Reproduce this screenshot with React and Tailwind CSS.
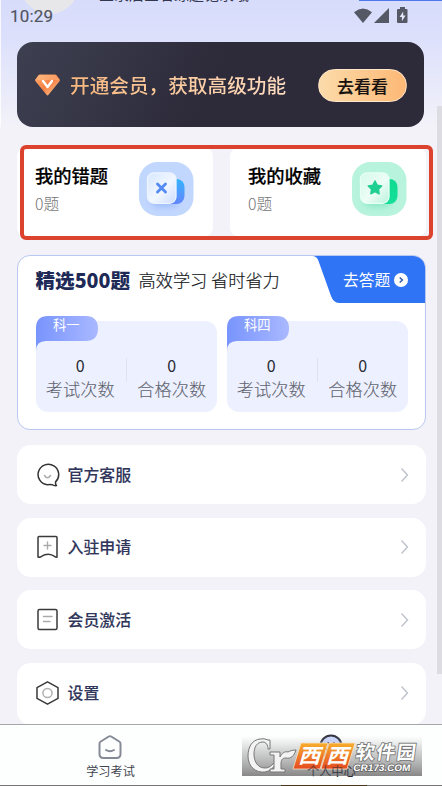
import React from 'react';

const cjk = 'font-["Noto_Sans_CJK_SC",sans-serif]';

function StatusBar() {
  return (
    <header className="relative h-[42px] shrink-0 overflow-hidden">
      <div className="absolute left-[20px] top-[-45px] size-[59px] rounded-full bg-[#e7e7ea]" />
      <div className="absolute left-[99px] top-[-15px] text-[15px] leading-[17px] whitespace-nowrap text-[#34384f]">登录后查看练题记录哦</div>
      <div className="absolute left-[359px] top-0 h-px w-[83px] bg-[#4f78e8]" />
      <div className="relative flex h-[31px] items-center justify-between pl-[10px] pr-[33px]">
        <span className='font-["Roboto",sans-serif] text-[17px] leading-[20px] tracking-[0.2px] text-[#50545f] [-webkit-text-stroke:0.150px_#50545f]'>10:29</span>
        <svg width="56" height="18" viewBox="0 0 56 18" fill="#555966">
          <path d="M1 5.2Q10 -2 19 5.2L10 16Z" />
          <path d="M36 1V16H21Z" />
          <path d="M45 2.100h2V0h5v2.100h1.500q1 0 1 1V15q0 1-1 1h-8.500q-1 0-1-1V3.100q0-1 1-1Z" />
          <path d="M50.200 4.500 46.600 10h2.300v4.300l3.700-5.800h-2.400Z" fill="#e3e6fa" />
        </svg>
      </div>
    </header>
  );
}

function VipCard() {
  return (
    <section className="ml-[17px] flex h-[85px] w-[407px] shrink-0 items-center rounded-[16px] bg-[linear-gradient(115deg,#3d4051_0%,#2d2a39_48%,#2d2a39_100%)] pl-[17px] pr-[17px]">
      <svg width="27" height="24" viewBox="0 0 27 24">
        <defs>
          <linearGradient id="gem" x1="0" y1="0" x2="1" y2="1">
            <stop stopColor="#ffb070" /><stop offset=".5" stopColor="#f77f43" /><stop offset="1" stopColor="#ffd09a" />
          </linearGradient>
        </defs>
        <path d="M6 1.500h15q1 0 1.600.8l3 4q.7 1-.1 2L14.500 21.800q-1 1.200-2 0L1.500 8.300q-.8-1-.1-2l3-4q.6-.8 1.600-.8Z" fill="url(#gem)" />
        <path d="M5 2h17l3 5H2Z" fill="#ffca98" opacity=".4" />
        <path d="m9 8 4.500 6L18 8" fill="none" stroke="#fff" strokeWidth="2.400" strokeLinecap="round" strokeLinejoin="round" />
      </svg>
      <h2 className="ml-[9px] mt-[1px] whitespace-nowrap bg-gradient-to-r from-[#f9b97e] to-[#fddcc0] bg-clip-text text-[19.650px] font-medium leading-[28px] text-transparent">开通会员，获取高级功能</h2>
      <button className="ml-auto mt-[1px] h-[33px] w-[89px] rounded-full border border-[#ffe7ca] bg-gradient-to-r from-[#fbdbaa] to-[#fdb875] text-[17px] font-medium leading-[31px] text-[#17120f] [-webkit-text-stroke:0.200px_#17120f]">去看看</button>
    </section>
  );
}

function StackIcon({ green }) {
  const id = green ? 'green' : 'blue';
  return (
    <svg width="55" height="55" viewBox="0 0 55 55">
      <defs>
        <linearGradient id={id + 'Back'} x1="0" y1="0" x2="0" y2="1">
          <stop stopColor={green ? '#0edb90' : '#35b3ff'} /><stop offset="1" stopColor={green ? '#15df9a' : '#6385fb'} />
        </linearGradient>
        <linearGradient id={id + 'Front'} x1="0" y1="0" x2="1" y2="1">
          <stop stopColor={green ? '#d5faeb' : '#d5e7ff'} /><stop offset=".55" stopColor={green ? '#edfdf7' : '#f2f7ff'} /><stop offset="1" stopColor={green ? '#b9f2db' : '#ccdcff'} />
        </linearGradient>
        <filter id={id + 'Shade'} x="-30%" y="-30%" width="160%" height="170%"><feGaussianBlur stdDeviation="3" /></filter>
      </defs>
      <rect width="54.500" height="54" rx="18.500" fill={green ? '#b7f3dd' : '#c2d7fe'} />
      <rect x="12" y="21" width="27" height="24" rx="7" fill={green ? '#57dcae' : '#769dfa'} opacity=".45" filter={`url(#${id}Shade)`} />
      <rect x="21" y="17" width="24.500" height="25" rx="8" fill={`url(#${id}Back)`} />
      <rect x="8.500" y="10.800" width="28.500" height="30.500" rx="6.500" fill={`url(#${id}Front)`} stroke={green ? '#e7fff6' : '#edf4ff'} strokeWidth="1.300" />
      {green ? (
        <path d="m23 19 2.100 4.200 4.600.7-3.300 3.300.7 4.600-4.100-2.100-4.100 2.100.7-4.600-3.300-3.300 4.600-.7Z" fill="#20cf92" stroke="#20cf92" strokeWidth="1.500" strokeLinejoin="round" />
      ) : (
        <path d="m18.500 22 8 8m0-8-8 8" stroke="#558bf2" strokeWidth="2.900" strokeLinecap="round" />
      )}
    </svg>
  );
}

function CountCard({ title, green }) {
  return (
    <article className="flex h-[88px] w-[196px] rounded-[8px] bg-white pl-[18px] pr-[19px] pt-[14px]">
      <div className="flex-1 whitespace-nowrap">
        <h3 className="text-[18.300px] font-medium leading-[26px] text-black [-webkit-text-stroke:0.200px_black]">{title}</h3>
        <p className="mt-[5px] text-[15.800px] font-light leading-[22px] text-[#777]">0题</p>
      </div>
      <StackIcon green={green} />
    </article>
  );
}

function ExamPanel({ label }) {
  return (
    <div className="relative h-[91px] w-[181px] rounded-[12px] bg-[#edf0ff] pt-[34px]">
      <svg className="absolute left-0 top-[-5px]" width="63" height="35" viewBox="0 0 63 35">
        <defs>
          <linearGradient id={label}><stop stopColor="#7894fd" /><stop offset="1" stopColor="#a9b8ff" /></linearGradient>
        </defs>
        <path d="M0 12Q0 0 12 0H49.500Q62 0 62 12.500Q62 25 49.500 25H10Q0 25 0 35Z" fill={`url(#${label})`} />
      </svg>
      <span className="absolute left-[17px] top-[-6px] text-[13.300px] leading-[20px] text-white">{label}</span>
      <div className="flex">
        {['考试次数', '合格次数'].map((text, i) => (
          <div key={text} className={`relative flex w-[91px] flex-col items-center ${i === 0 ? 'pr-[2px]' : 'pl-0'}`}>
            {i === 1 && <i className="absolute left-[-1px] top-[3px] h-[24px] w-px bg-[#dde1f2]" />}
            <span className="text-[16px] leading-[20px] text-[#292b32]">0</span>
            <span className="whitespace-nowrap text-[17.200px] font-light leading-[27px] text-[#60646f] [-webkit-text-stroke:0.100px_#60646f]">{text}</span>
          </div>
        ))}
      </div>
    </div>
  );
}

function ExamCard() {
  return (
    <section className="ml-[17px] mt-[19px] h-[175px] w-[409px] shrink-0 overflow-hidden rounded-[13px] border border-[#b9c8f0] bg-white">
      <div className="flex h-[47px]">
        <h2 className="ml-[17.500px] w-[97px] whitespace-nowrap text-[19.600px] font-black leading-[48px] text-[#202a57]">精选500题</h2>
        <p className="ml-[6px] whitespace-nowrap text-[17.200px] font-light leading-[47px] text-[#16181d] [-webkit-text-stroke:0.200px_#16181d]">高效学习 省时省力</p>
        <div className="relative ml-auto h-[47px] w-[112px] shrink-0">
          <svg className="absolute inset-0" width="112" height="47" viewBox="0 0 112 47"><path d="M0 0Q4 .5 5.500 5L18 40Q20.500 47 26 47H112V0Z" fill="#3074f6" /></svg>
          <div className="relative flex h-full items-center pl-[30px] text-[15.800px] leading-[22px] text-white">
            去答题
            <svg className="ml-[4px]" width="14" height="14" viewBox="0 0 14 14"><circle cx="7" cy="7" r="7" fill="white" /><path d="m5.700 4.500 2.700 2.500-2.700 2.500" fill="none" stroke="#3659a8" strokeWidth="1.500" /></svg>
          </div>
        </div>
      </div>
      <div className="ml-[18px] mt-[18px] flex gap-[10px]">
        <ExamPanel label="科一" />
        <ExamPanel label="科四" />
      </div>
    </section>
  );
}

const icons = {
  service: <><path d="M19.600 18.900A10.300 10.300 0 1 0 11.500 21.800Q14 21.500 16 21.700Q18.500 23 20.500 22.600Q19.300 21.500 19.600 18.900" stroke="#343434" strokeWidth="1.500" /><path d="M8.500 12.500q3 4.500 6 0" stroke="#aaa" strokeWidth="1.500" /></>,
  apply: <><path d="M3 1.500h17q1 0 1 1V22q-1 .4-2-.3-6.500-4.700-14 0-1.800.8-3 .3V2.500q0-1 1-1Z" stroke="#3a3a3a" strokeWidth="1.500" /><path d="M11.500 7v7M8 10.500h7" stroke="#aaa" strokeWidth="1.400" /></>,
  active: <><rect x="2" y="1.500" width="19" height="20" rx="1.500" stroke="#3a3a3a" strokeWidth="1.500" /><path d="M7.500 8.500h8.500m-8.500 5h6.500" stroke="#aaa" strokeWidth="1.500" /></>,
  settings: <><path d="m11.500 .8 10.500 5.800v10.800l-10.500 5.800L1 17.400V6.600Z" stroke="#3a3a3a" strokeWidth="1.500" /><circle cx="11.500" cy="12" r="4.600" stroke="#b0b0b0" strokeWidth="1.500" /></>,
};

function MenuRow({ icon, title, last }) {
  return (
    <div className={`flex w-[409px] shrink-0 items-center rounded-[14px] bg-white pl-[18.500px] pr-[16px] ${last ? 'h-[62px] pb-[2px]' : 'h-[59px]'}`}>
      <svg width="24" height="24" viewBox="0 0 24 24" fill="none" strokeLinecap="round" strokeLinejoin="round">{icons[icon]}</svg>
      <span className="ml-[8px] text-[15.900px] font-medium leading-[24px] text-[#30365a] [-webkit-text-stroke:0.100px_#30365a]">{title}</span>
      <svg className="ml-auto" width="11" height="16" viewBox="0 0 11 16" fill="none"><path d="m2.500 1.500 6 6.500-6 6.500" stroke="#bfc1cc" strokeWidth="1.400" /></svg>
    </div>
  );
}

function Watermark() {
  return (
    <svg className={`${cjk} absolute left-[242px] top-[735px]`} width="180" height="42" viewBox="0 0 180 42">
      <defs>
        <linearGradient id="plate" x1="0" y1="0" x2="0" y2="1"><stop stopColor="#aaa" stopOpacity="0" /><stop offset=".4" stopColor="#999" stopOpacity=".45" /><stop offset="1" stopColor="#777" stopOpacity=".88" /></linearGradient>
        <linearGradient id="orange" x1="0" y1="0" x2="0" y2="1"><stop stopColor="#f8ae2d" /><stop offset="1" stopColor="#e54a20" /></linearGradient>
      </defs>
      <rect y="1" width="180" height="40" fill="url(#plate)" />
      <g fill="#f3f3f3" stroke="#777" strokeWidth="1" strokeLinejoin="round">
        <path d="M26 5Q22 3 18 4C10 5 6 12 6 21c0 11 8 17 17 16 5-1 8-4 11-8l-2-1c-3 3-5 5-9 5-7 0-11-6-11-14 0-7 3-12 9-12 3 0 5 3 5 7h2V5Z" />
        <path d="M28 17h10v5c2-4 5-6 8-5 2-1 4-2 8-2-2 6-5 9-10 8-4 0-5 2-5 6v5h4v3H28v-3h4V20h-4Z" />
      </g>
      <path d="M59 8h27l-8 26H51ZM87 8h26l-8 26H79Z" fill="url(#orange)" stroke="#f6e1c6" strokeWidth=".8" />
      <g fontWeight="700" fill="white">
        <text transform="translate(56 28) scale(1.100 1) skewX(-15)" fontSize="20">西</text>
        <text transform="translate(84 28) scale(1.100 1) skewX(-15)" fontSize="20">西</text>
      </g>
      <text transform="translate(113 24) skewX(-8)" fontSize="19" fontWeight="700" fill="white" stroke="#777" strokeWidth="1.700" paintOrder="stroke" textLength="60">软件园</text>
      <text className='font-["Liberation_Sans",sans-serif]' transform="translate(111 36) skewX(-8)" fontSize="9.500" fontWeight="700" fill="#fff" stroke="#666" strokeWidth="1.600" paintOrder="stroke" textLength="57" lengthAdjust="spacingAndGlyphs">CR173.COM</text>
    </svg>
  );
}

function BottomNav() {
  return (
    <nav className="relative flex h-[62px] shrink-0 border-b border-t border-b-[#777] border-t-[#a7a7ab] bg-[#fdfefe]">
      <div className="flex w-[221px] flex-col items-center pt-[10px]">
        <svg className="mr-[2px]" width="24" height="25" viewBox="0 0 24 25" fill="none" stroke="#858b96" strokeWidth="2" strokeLinecap="round" strokeLinejoin="round"><path d="M10.800 1.500q1.200-.7 2.400 0l8 5q1.300.8 1.300 2.300V19q0 4-4 4h-13q-4 0-4-4V8.800q0-1.500 1.300-2.300Z" /><path d="M8 15q4 2.500 8 0" /></svg>
        <span className="mt-[1px] text-[12.200px] leading-[20px] text-[#42454f]">学习考试</span>
      </div>
      <div className="flex w-[221px] flex-col items-center pt-[9px]">
        <svg className="mr-[2px]" width="24" height="25" viewBox="0 0 24 25" fill="none"><circle cx="12" cy="12" r="10.500" fill="#cdd8ff" stroke="#333642" strokeWidth="2" /><path d="M9 8v3m6-3v3M7 15q5 4 10 0" stroke="#333642" strokeWidth="1.500" /></svg>
        <span className="mt-[2px] text-[12.200px] leading-[20px] text-[#252733]">个人中心</span>
      </div>
      <div className="absolute bottom-[-1px] left-[281px] h-px w-[86px] bg-[#4c3517]" />
    </nav>
  );
}

export default function App() {
  return (
    <main className={`${cjk} relative flex h-[786px] w-[442px] flex-col overflow-hidden bg-[#f3f2f9] bg-[linear-gradient(#d7dcfc_0px,#dce0fb_38px,#f3f2f9_127px)]`}>
      <div className="absolute left-0 top-0 h-[127px] w-px bg-white/80" />
      <StatusBar />
      <VipCard />
      <div className="ml-[17px] mt-[21px] flex shrink-0 gap-[17px]">
        <CountCard title="我的错题" />
        <CountCard title="我的收藏" green />
      </div>
      <ExamCard />
      <section className="ml-[17px] mt-[15px] flex h-[279px] w-[409px] shrink-0 flex-col gap-[13.500px] overflow-hidden">
        <MenuRow icon="service" title="官方客服" />
        <MenuRow icon="apply" title="入驻申请" />
        <MenuRow icon="active" title="会员激活" />
        <MenuRow icon="settings" title="设置" last />
      </section>
      <BottomNav />
      <div className="absolute left-[437px] top-[106px] h-[568px] w-[5px] bg-[#dddce3]" />
      <div className="absolute left-[20px] top-[145px] h-[95px] w-[413px] rounded-[6px] border-4 border-[#dc432e]" />
      <Watermark />
      <span className="absolute left-[307px] top-[761px] h-[20px] whitespace-nowrap text-[12.200px] leading-[20px] text-[#252733]/60" aria-hidden="true">个人中心</span>
    </main>
  );
}
